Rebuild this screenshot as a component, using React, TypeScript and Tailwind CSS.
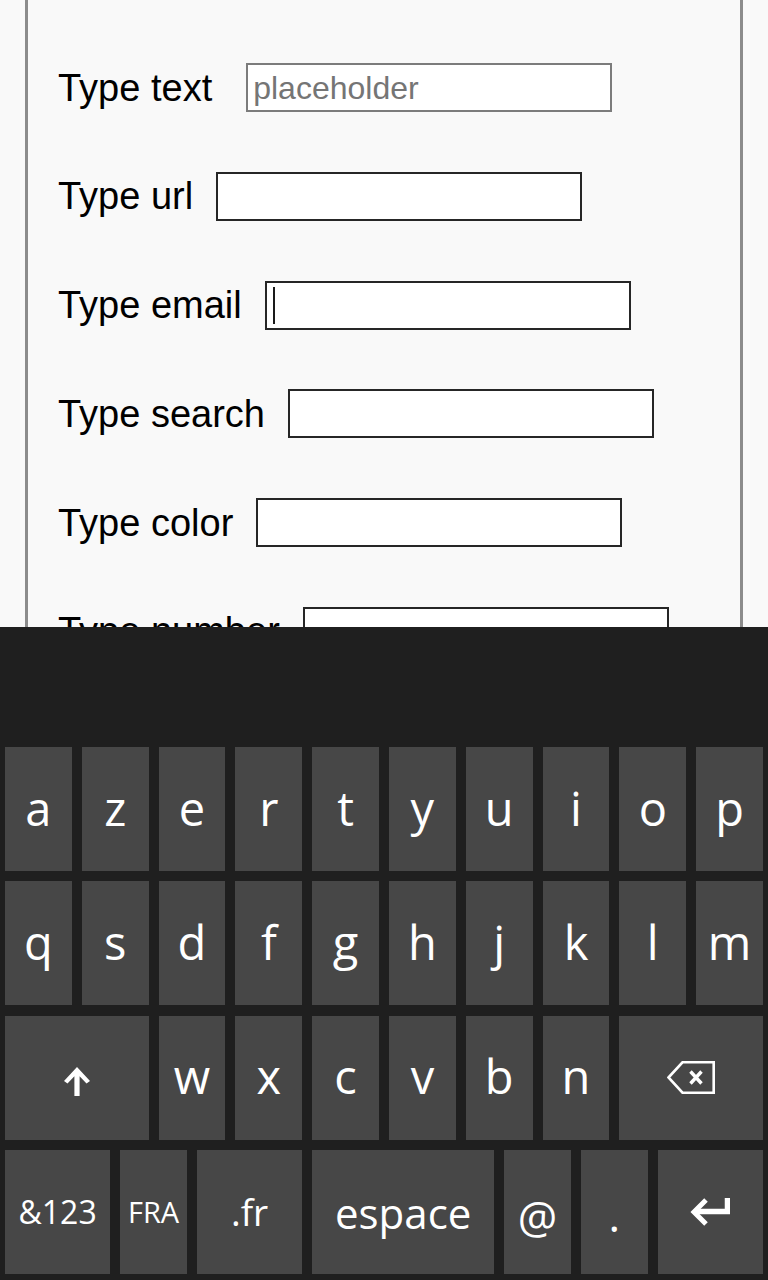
const fields = [
  { label: 'Type text', placeholder: 'placeholder', first: true },
  { label: 'Type url' },
  { label: 'Type email', caret: true },
  { label: 'Type search' },
  { label: 'Type color' },
  { label: 'Type number' },
];

type Key = { label?: string; w: string; size?: string; icon?: 'shift' | 'back' | 'enter' };

const rows: Key[][] = [
  'azertyuiop'.split('').map((c) => ({ label: c, w: 'w-[76.8px]' })),
  'qsdfghjklm'.split('').map((c) => ({ label: c, w: 'w-[76.8px]' })),
  [
    { icon: 'shift', w: 'w-[153.6px]' },
    ...'wxcvbn'.split('').map((c) => ({ label: c, w: 'w-[76.8px]' })),
    { icon: 'back', w: 'w-[153.6px]' },
  ],
  [
    { label: '&123', w: 'w-[115.2px]', size: 'text-[32px]' },
    { label: 'FRA', w: 'w-[76.8px]', size: 'text-[29px]' },
    { label: '.fr', w: 'w-[115.2px]', size: 'text-[37px]' },
    { label: 'espace', w: 'w-[192px]', size: 'text-[42px] translate-y-[1px]' },
    { label: '@', w: 'w-[76.8px]', size: 'text-[44px] translate-y-[4px]' },
    { label: '.', w: 'w-[76.8px]', size: 'text-[44px] translate-y-[3px]' },
    { icon: 'enter', w: 'w-[115.2px]' },
  ],
];

function Icon({ name }: { name: 'shift' | 'back' | 'enter' }) {
  if (name === 'shift') {
    return (
      <svg width="26" height="29" viewBox="0 0 26 29" className="translate-y-[4px]">
        <path d="M13 0 L26 14 L22.5 16.5 L15.6 9.2 V29 H10.4 V9.2 L3.5 16.5 L0 14 Z" fill="white" />
      </svg>
    );
  }
  if (name === 'back') {
    return (
      <svg width="48" height="33" viewBox="0 0 48 33" fill="none" stroke="white">
        <path d="M1.5 16.5 L15.5 1.3 H46.7 V31.7 H15.5 Z" strokeWidth="2.6" />
        <path d="M23.5 10.5 L34.5 22.5 M34.5 10.5 L23.5 22.5" strokeWidth="3.4" />
      </svg>
    );
  }
  return (
    <svg width="40" height="28" viewBox="0 0 40 28" fill="none" stroke="white">
      <path d="M16 2 L4 14 L16 26" strokeWidth="5" />
      <path d="M5 13.5 H37.5 V0" strokeWidth="5.5" />
    </svg>
  );
}

export default function App() {
  return (
    <div className="flex flex-col h-[1280px] w-[768px] overflow-hidden">
      <div className="h-[627px] shrink-0 overflow-hidden bg-[#f9f9f9]">
        <div className="ml-[25px] w-[718px] h-full border-x-[3px] border-[#8c8c8c] pt-[63px] pl-[30px]">
          <div className="flex flex-col gap-[59.8px]">
            {fields.map((f) => (
              <div key={f.label} className="flex items-center h-[49px] gap-[23px]">
                <span className="text-[38px] leading-none text-black [font-family:'Liberation_Sans',Arial,sans-serif]">
                  {f.label}
                </span>
                <div
                  className={
                    'relative flex items-center box-border w-[366px] h-[49px] bg-white border-2 pl-[5px] ' +
                    (f.first ? 'ml-[11px] border-[#7c7c7c]' : 'border-[#262626]')
                  }
                >
                  {f.placeholder && (
                    <span className="text-[32px] leading-none text-[#757575] [font-family:'Liberation_Sans',Arial,sans-serif]">
                      {f.placeholder}
                    </span>
                  )}
                  {f.caret && <div className="ml-[1px] w-[2px] h-[37px] bg-[#1a1a1a]" />}
                </div>
              </div>
            ))}
          </div>
        </div>
      </div>
      <div className="flex-1 bg-[#1f1f1f] pt-[120px] [font-family:'Open_Sans',sans-serif] font-medium text-white">
        <div className="flex flex-col gap-[10.33px]">
          {rows.map((row, i) => (
            <div key={i} className="flex h-[124px]">
              {row.map((k, j) => (
                <div key={j} className={k.w + ' px-[5px] h-full shrink-0'}>
                  <div className="h-full bg-[#474747] flex items-center justify-center">
                    {k.icon ? (
                      <Icon name={k.icon} />
                    ) : (
                      <span className={(k.size ?? 'text-[47px] -translate-y-[1px]') + ' leading-none'}>{k.label}</span>
                    )}
                  </div>
                </div>
              ))}
            </div>
          ))}
        </div>
      </div>
    </div>
  );
}
